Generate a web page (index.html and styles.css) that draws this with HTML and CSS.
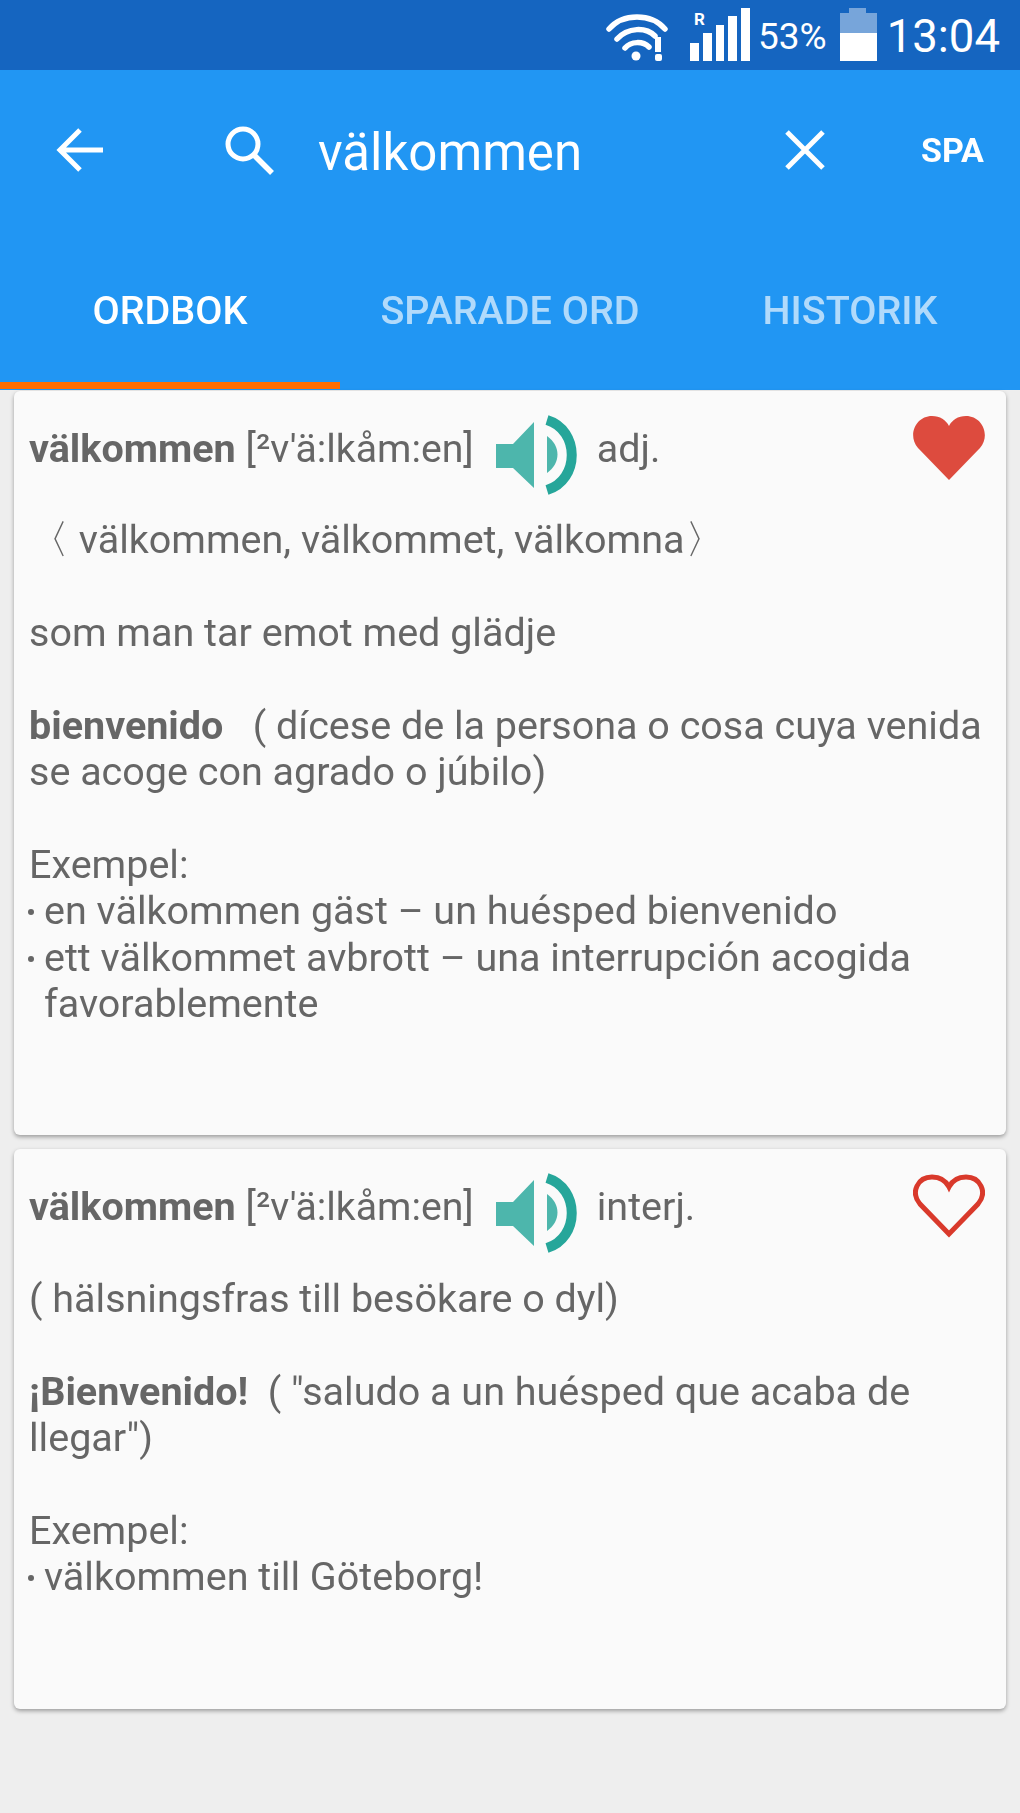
FILE: index.html
```html
<!DOCTYPE html>
<html lang="sv">
<head>
<meta charset="utf-8">
<title>Ordbok</title>
<link rel="stylesheet" href="styles.css">
</head>
<body>
<div class="status">
  <svg class="ic-wifi" viewBox="0 0 62 48" width="62" height="48"><g fill="none" stroke="#fff" stroke-width="5.5" stroke-linecap="round"><path d="M3 15C17 -1 45 -1 59 15"/><path d="M11 25C22 13 40 13 49 22"/><path d="M19 34C25 27 37 27 43 33"/></g><circle cx="30" cy="42" r="4.5" fill="#fff"/><rect x="49" y="23" width="6" height="15" fill="#fff"/><rect x="49" y="40" width="7" height="7" rx="2" fill="#fff"/></svg>
  <div class="signal">
    <span class="roam">R</span>
    <span class="bar b1"></span><span class="bar b2"></span><span class="bar b3"></span><span class="bar b4"></span><span class="bar b5"></span>
  </div>
  <span class="pct">53%</span>
  <svg class="ic-batt" viewBox="0 0 37 53" width="37" height="53"><path d="M9 0H26V5H37V25H0V5H9Z" fill="#fff" fill-opacity=".42"/><rect y="25" width="37" height="28" fill="#fff"/></svg>
  <span class="clock">13:04</span>
</div>
<header class="appbar">
  <div class="toolbar">
    <svg class="ic-back" viewBox="0 0 48 46" width="48" height="46"><path d="M47 23H4M24 3L4 23L24 43" fill="none" stroke="#fff" stroke-width="5"/></svg>
    <svg class="ic-search" viewBox="0 0 52 52" width="52" height="52"><circle cx="20" cy="20" r="15" fill="none" stroke="#fff" stroke-width="5"/><path d="M31 31L49 49" stroke="#fff" stroke-width="5.5"/></svg>
    <span class="query">välkommen</span>
    <svg class="ic-close" viewBox="0 0 42 42" width="42" height="42"><path d="M3 3L39 39M39 3L3 39" stroke="#fff" stroke-width="5"/></svg>
    <span class="lang">SPA</span>
  </div>
  <nav class="tabs">
    <div class="tab active">ORDBOK</div>
    <div class="tab">SPARADE ORD</div>
    <div class="tab">HISTORIK</div>
  </nav>
</header>
<main class="list">
  <article class="card first">
    <div class="head">
      <b>välkommen</b><span class="pron">[²v'ä:lkåm:en]</span>
      <svg class="ic-sound" viewBox="0 0 84 80" width="84" height="80"><path d="M0 29H17L38 7V73L17 53H0Z" fill="#4DB6AC"/><path d="M51 21C65 31 65 48 51 58Z" fill="#4DB6AC"/><path d="M51 5C84 15 84 65 51 75" fill="none" stroke="#26A69A" stroke-width="10"/></svg>
      <span>adj.</span>
      <svg class="ic-heart" viewBox="0 0 72 66" width="72" height="66"><path d="M36 65L5 33C-6 20 3 1 19 1C27 1 33 5 36 11C39 5 45 1 53 1C69 1 78 20 67 33Z" fill="#DD4B3E"/></svg>
    </div>
    <p class="forms">〈 välkommen, välkommet, välkomna〉</p>
    <p>som man tar emot med glädje</p>
    <p><b>bienvenido</b> &nbsp; ( dícese de la persona o cosa cuya venida se acoge con agrado o júbilo)</p>
    <p>Exempel:</p>
    <ul>
      <li>en välkommen gäst – un huésped bienvenido</li>
      <li>ett välkommet avbrott – una interrupción acogida favorablemente</li>
    </ul>
  </article>
  <article class="card second">
    <div class="head">
      <b>välkommen</b><span class="pron">[²v'ä:lkåm:en]</span>
      <svg class="ic-sound" viewBox="0 0 84 80" width="84" height="80"><path d="M0 29H17L38 7V73L17 53H0Z" fill="#4DB6AC"/><path d="M51 21C65 31 65 48 51 58Z" fill="#4DB6AC"/><path d="M51 5C84 15 84 65 51 75" fill="none" stroke="#26A69A" stroke-width="10"/></svg>
      <span>interj.</span>
      <svg class="ic-heart" viewBox="0 0 72 66" width="72" height="66"><path d="M36 61L7 31C-3 19 5 4 19 4C27 4 33 8 36 14C39 8 45 4 53 4C67 4 75 19 65 31Z" fill="none" stroke="#D9392B" stroke-width="5"/></svg>
    </div>
    <p>( hälsningsfras till besökare o dyl)</p>
    <p><b>¡Bienvenido!</b> &nbsp;( "saludo a un huésped que acaba de llegar")</p>
    <p>Exempel:</p>
    <ul>
      <li>välkommen till Göteborg!</li>
    </ul>
  </article>
</main>
</body>
</html>
```
FILE: styles.css
```css
* { box-sizing: border-box; }
html, body { margin: 0; padding: 0; }
body {
  width: 1020px;
  height: 1813px;
  background: #eeeeee;
  font-family: Roboto, "Noto Sans", sans-serif;
  color: #666666;
  overflow: hidden;
  filter: blur(0.5px);
}
.status {
  height: 70px;
  background: #1565C0;
  display: flex;
  align-items: center;
  justify-content: flex-end;
  padding-right: 20px;
  padding-bottom: 1px;
  color: #fff;
}
.ic-wifi { margin-right: 22px; margin-top: 7px; }
.signal {
  position: relative;
  display: flex;
  align-items: flex-end;
  gap: 4px;
  height: 53px;
  width: 60px;
  margin-right: 8px;
}
.roam {
  position: absolute;
  left: 4px;
  top: 1px;
  font-size: 17px;
  font-weight: 700;
  line-height: 20px;
}
.bar { width: 9px; background: #fff; }
.b1 { height: 18px; }
.b2 { height: 28px; }
.b3 { height: 36px; }
.b4 { height: 45px; }
.b5 { height: 53px; }
.pct { font-size: 37px; margin-right: 13px; margin-top: 4px; }
.ic-batt { margin-right: 10px; }
.clock { font-size: 45.5px; margin-top: 4px; }
.appbar { height: 320px; background: #2196F3; padding-bottom: 1px; }
.toolbar { display: flex; align-items: center; height: 160px; color: #fff; }
.ic-back { margin-left: 56px; margin-right: 119px; }
.ic-search { margin-right: 43px; }
.query { font-size: 51px; width: 466px; margin-top: 4px; }
.ic-close { margin-right: 95px; }
.lang { font-size: 34px; font-weight: 700; }
.tabs { display: flex; }
.tab {
  flex: 1;
  height: 159px;
  padding-top: 58px;
  line-height: 46px;
  text-align: center;
  font-size: 39.5px;
  font-weight: 500;
  color: rgba(255,255,255,.65);
  border-bottom: 7px solid transparent;
}
.tab.active { color: #fff; border-bottom-color: #FF6D00; }
.list { padding: 1px 14px 0; }
.card {
  background: #fafafa;
  border-radius: 6px;
  padding: 26px 15px 0;
  font-size: 39.5px;
  line-height: 46.4px;
  box-shadow: 0 2px 4px rgba(0,0,0,.35);
  margin-bottom: 14px;
}
.first { height: 744px; }
.second { height: 560px; }
.head { display: flex; align-items: center; height: 64px; position: relative; }
.head b { margin-right: 10px; }
.pron { font-size: 39.2px; }
.ic-sound { margin: 12px 17px 0 22px; }
.ic-heart { position: absolute; right: 6px; top: -2px; }
.card p { margin: 0 0 46.4px; }
.head + p { margin-top: 36px; }
.second .head + p { margin-top: 37px; }
b { font-weight: 700; }
ul { list-style: none; margin: -46.4px 0 0; padding: 0 0 0 15px; }
li { position: relative; }
li::before {
  content: "";
  position: absolute;
  left: -16px;
  top: 21px;
  width: 6px;
  height: 6px;
  border-radius: 50%;
  background: #666;
}
```
